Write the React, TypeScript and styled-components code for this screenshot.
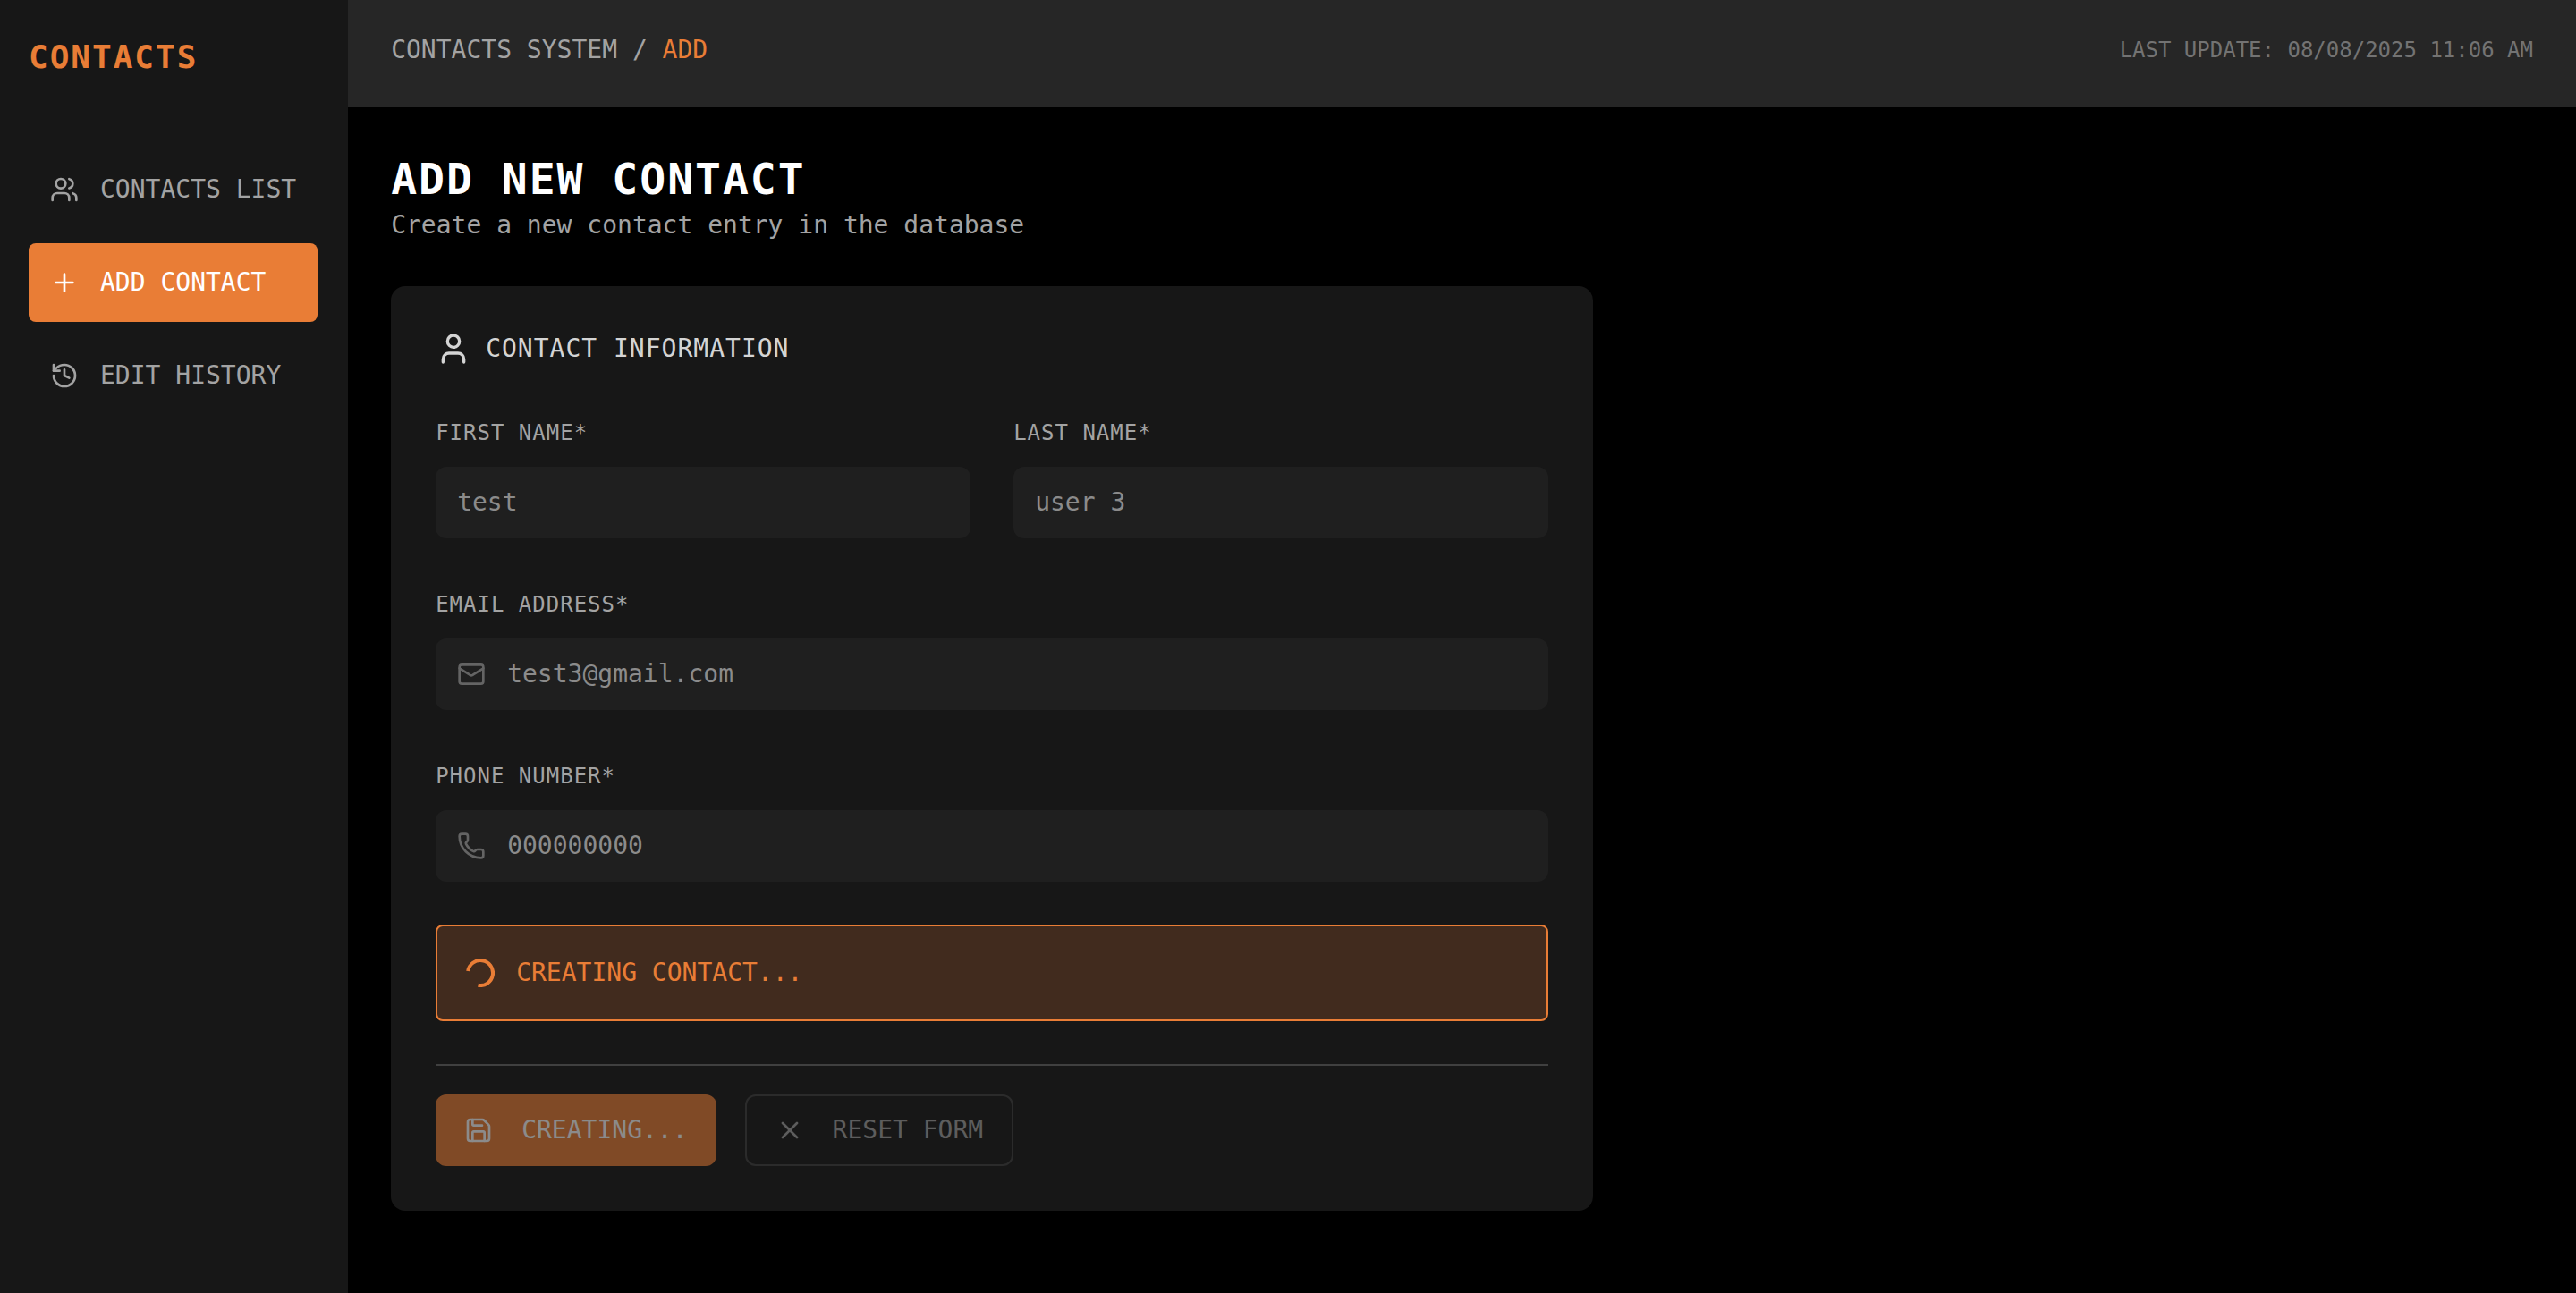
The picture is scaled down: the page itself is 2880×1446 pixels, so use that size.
import React, { useState } from "react";
import styled, { createGlobalStyle } from "styled-components";
import { History, Mail, Phone, Plus, Save, User, Users, X } from "lucide-react";

const color = {
  page: "#000000",
  panel: "#171717",
  bar: "#262626",
  line: "#404040",
  accent: "#e97d36",
  text: "#ffffff",
  soft: "#d4d4d4",
  muted: "#a3a3a3",
  faint: "#737373",
};

const GlobalStyle = createGlobalStyle`
  *, *::before, *::after { box-sizing: border-box; }
  body {
    margin: 0;
    background: ${color.page};
    color: ${color.text};
    font-family: "DejaVu Sans Mono", "Liberation Mono", monospace;
    font-size: 28px;
    line-height: 40px;
  }
  button, input { font: inherit; color: inherit; }
  h1, h2, p { margin: 0; }
  svg { flex-shrink: 0; display: block; }
`;

const Shell = styled.div`
  display: flex;
  min-height: 100vh;
`;

const Sidebar = styled.aside`
  flex: 0 0 388px;
  padding: 36px 34px 32px 32px;
  background: ${color.panel};
`;

const Brand = styled.p`
  margin-bottom: 76px;
  color: ${color.accent};
  font-size: 36px;
  font-weight: 700;
  line-height: 56px;
  letter-spacing: 2px;
`;

const Nav = styled.nav`
  display: flex;
  flex-direction: column;
  gap: 16px;
`;

const NavLink = styled.a<{ $active?: boolean }>`
  display: flex;
  align-items: center;
  gap: 24px;
  padding: 24px;
  border-radius: 8px;
  background: ${(p) => (p.$active ? color.accent : "transparent")};
  color: ${(p) => (p.$active ? color.text : color.muted)};
  text-decoration: none;
  white-space: nowrap;
`;

const Content = styled.div`
  flex: 1;
  min-width: 0;
`;

const TopBar = styled.header`
  display: flex;
  align-items: center;
  justify-content: space-between;
  padding: 36px 48px 44px;
  background: ${color.bar};
  color: ${color.muted};
`;

const Current = styled.span`
  color: ${color.accent};
`;

const Updated = styled.span`
  color: ${color.faint};
  font-size: 24px;
`;

const Main = styled.main`
  padding: 48px;
`;

const Title = styled.h1`
  font-size: 48px;
  font-weight: 700;
  line-height: 64px;
  letter-spacing: 2px;
`;

const Subtitle = styled.p`
  margin-bottom: 48px;
  color: ${color.muted};
`;

const Card = styled.form`
  display: flex;
  flex-direction: column;
  gap: 48px;
  max-width: 1344px;
  padding: 50px;
  border-radius: 16px;
  background: ${color.panel};
`;

const CardTitle = styled.h2`
  display: flex;
  align-items: center;
  gap: 16px;
  color: ${color.soft};
  font-size: 28px;
  font-weight: 400;
  letter-spacing: 1px;
`;

const Columns = styled.div`
  display: grid;
  grid-template-columns: 1fr 1fr;
  gap: 48px;
`;

const FieldBox = styled.div`
  display: flex;
  flex-direction: column;
  gap: 12px;
`;

const Label = styled.label`
  color: ${color.muted};
  font-size: 24px;
  line-height: 52px;
  letter-spacing: 1px;
`;

const InputFrame = styled.div`
  display: flex;
  align-items: center;
  gap: 24px;
  height: 80px;
  padding: 0 24px;
  border-radius: 12px;
  background: #1f1f1f;
  color: #646464;
`;

const Input = styled.input`
  flex: 1;
  min-width: 0;
  padding: 0;
  border: 0;
  outline: 0;
  background: transparent;
  color: #8b8b8b;
`;

const Status = styled.div`
  display: flex;
  align-items: center;
  gap: 24px;
  padding: 32px;
  border: 2px solid ${color.accent};
  border-radius: 8px;
  background: #412b1e;
  color: ${color.accent};
`;

const Actions = styled.div`
  display: flex;
  gap: 32px;
  padding-top: 32px;
  border-top: 2px solid ${color.line};
`;

const Button = styled.button<{ $primary?: boolean }>`
  display: flex;
  align-items: center;
  gap: 32px;
  height: 80px;
  padding: 0 32px;
  border: ${(p) => (p.$primary ? "0" : `2px solid ${color.line}`)};
  border-radius: 12px;
  background: ${(p) => (p.$primary ? color.accent : "transparent")};
  color: ${(p) => (p.$primary ? color.text : color.muted)};
  opacity: 0.5;
`;

type FieldProps = {
  id: string;
  label: string;
  type?: string;
  initial: string;
  icon?: React.ReactNode;
};

function Field({ id, label, type = "text", initial, icon }: FieldProps) {
  const [value, setValue] = useState(initial);
  return (
    <FieldBox>
      <Label htmlFor={id}>{label}</Label>
      <InputFrame>
        {icon}
        <Input id={id} type={type} value={value} onChange={(e) => setValue(e.target.value)} disabled />
      </InputFrame>
    </FieldBox>
  );
}

function Spinner() {
  return (
    <svg width="32" height="32" viewBox="0 0 32 32" fill="none" stroke="currentColor" strokeWidth="4">
      <path d="M2.2 14A14 14 0 1 1 13.5 29.8" />
    </svg>
  );
}

export default function App() {
  return (
    <>
      <GlobalStyle />
      <Shell>
        <Sidebar>
          <Brand>CONTACTS</Brand>
          <Nav>
            <NavLink href="#list">
              <Users size={32} />
              CONTACTS LIST
            </NavLink>
            <NavLink href="#add" $active>
              <Plus size={32} />
              ADD CONTACT
            </NavLink>
            <NavLink href="#history">
              <History size={32} />
              EDIT HISTORY
            </NavLink>
          </Nav>
        </Sidebar>
        <Content>
          <TopBar>
            <span>
              CONTACTS SYSTEM / <Current>ADD</Current>
            </span>
            <Updated>LAST UPDATE: 08/08/2025 11:06 AM</Updated>
          </TopBar>
          <Main>
            <Title>ADD NEW CONTACT</Title>
            <Subtitle>Create a new contact entry in the database</Subtitle>
            <Card>
              <CardTitle>
                <User size={40} />
                CONTACT INFORMATION
              </CardTitle>
              <Columns>
                <Field id="first" label="FIRST NAME*" initial="test" />
                <Field id="last" label="LAST NAME*" initial="user 3" />
              </Columns>
              <Field id="email" label="EMAIL ADDRESS*" type="email" initial="test3@gmail.com" icon={<Mail size={32} />} />
              <Field id="phone" label="PHONE NUMBER*" type="tel" initial="000000000" icon={<Phone size={32} />} />
              <Status role="status">
                <Spinner />
                CREATING CONTACT...
              </Status>
              <Actions>
                <Button type="submit" $primary disabled>
                  <Save size={32} />
                  CREATING...
                </Button>
                <Button type="reset" disabled>
                  <X size={32} />
                  RESET FORM
                </Button>
              </Actions>
            </Card>
          </Main>
        </Content>
      </Shell>
    </>
  );
}
